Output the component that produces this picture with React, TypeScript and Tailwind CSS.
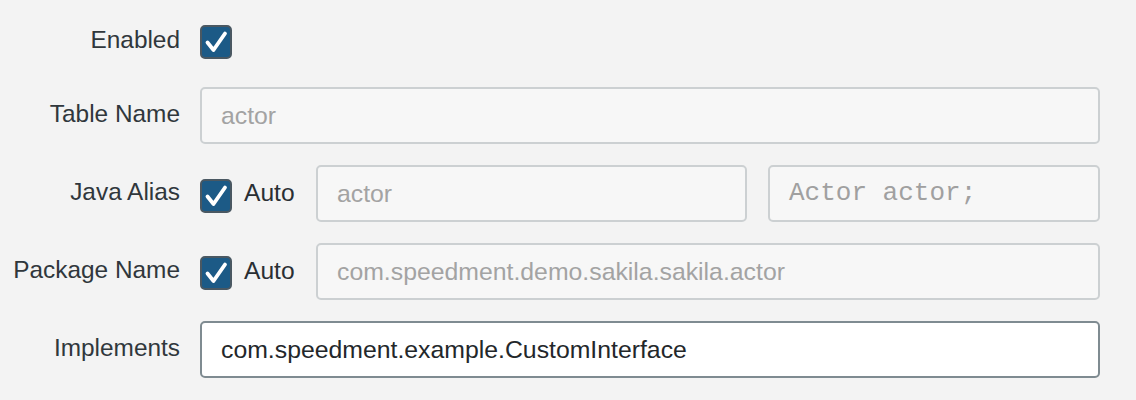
import React from "react";

function Check() {
  return (
    <div className="w-[32px] h-[34px] shrink-0 rounded-[5px] border-2 border-[#4a5862] bg-[#1c5a86] flex items-center justify-center">
      <svg width="24" height="24" viewBox="0 0 24 24">
        <path d="M3.5 12.5 L9.5 20 L21 3.5" fill="none" stroke="#ffffff" strokeWidth="3.8" strokeLinecap="round" strokeLinejoin="round" />
      </svg>
    </div>
  );
}

function Label({ children }: { children: React.ReactNode }) {
  return (
    <div className="w-[180px] shrink-0 text-right text-[24.4px] text-[#30373c] leading-none -mt-[3px]">
      {children}
    </div>
  );
}

function Field({ text, className = "" }: { text: string; className?: string }) {
  return (
    <div className={`h-[57px] rounded-[5px] border-2 border-[#ccd0d2] bg-[#f7f7f7] flex items-center pl-[19px] text-[24.8px] text-[#a3a3a3] ${className}`}>
      {text}
    </div>
  );
}

export default function App() {
  return (
    <div className="w-[1136px] h-[400px] bg-[#f3f3f3] pt-[25px] overflow-hidden" style={{ fontFamily: '"Liberation Sans", Arial, sans-serif' }}>
      <div className="flex items-center gap-[20px] h-[34px]">
        <Label>Enabled</Label>
        <Check />
      </div>
      <div className="flex flex-col gap-[21px] mt-[28px] w-[1100px]">
        <div className="flex items-center gap-[20px]">
          <Label>Table Name</Label>
          <Field text="actor" className="flex-1" />
        </div>
        <div className="flex items-center gap-[20px]">
          <Label>Java Alias</Label>
          <div className="flex-1 flex items-center">
            <div className="mt-[5px]"><Check /></div>
            <span className="ml-[12px] w-[72px] text-[24.6px] text-[#2a2f33]">Auto</span>
            <Field text="actor" className="w-[431px]" />
            <div className="ml-[21px] flex-1 h-[57px] rounded-[5px] border-2 border-[#ccd0d2] bg-[#f7f7f7] flex items-center pl-[19px] text-[26px] text-[#a0a0a0]" style={{ fontFamily: '"Liberation Mono", "Courier New", monospace' }}>
              Actor actor;
            </div>
          </div>
        </div>
        <div className="flex items-center gap-[20px]">
          <Label>Package Name</Label>
          <div className="flex-1 flex items-center">
            <div className="mt-[3px]"><Check /></div>
            <span className="ml-[12px] w-[72px] text-[24.6px] text-[#2a2f33]">Auto</span>
            <Field text="com.speedment.demo.sakila.sakila.actor" className="flex-1" />
          </div>
        </div>
        <div className="flex items-center gap-[20px]">
          <Label>Implements</Label>
          <div className="flex-1 h-[57px] rounded-[5px] border-2 border-[#7f8b91] bg-white flex items-center pl-[19px] text-[24.8px] text-[#23272a]">
            com.speedment.example.CustomInterface
          </div>
        </div>
      </div>
    </div>
  );
}
